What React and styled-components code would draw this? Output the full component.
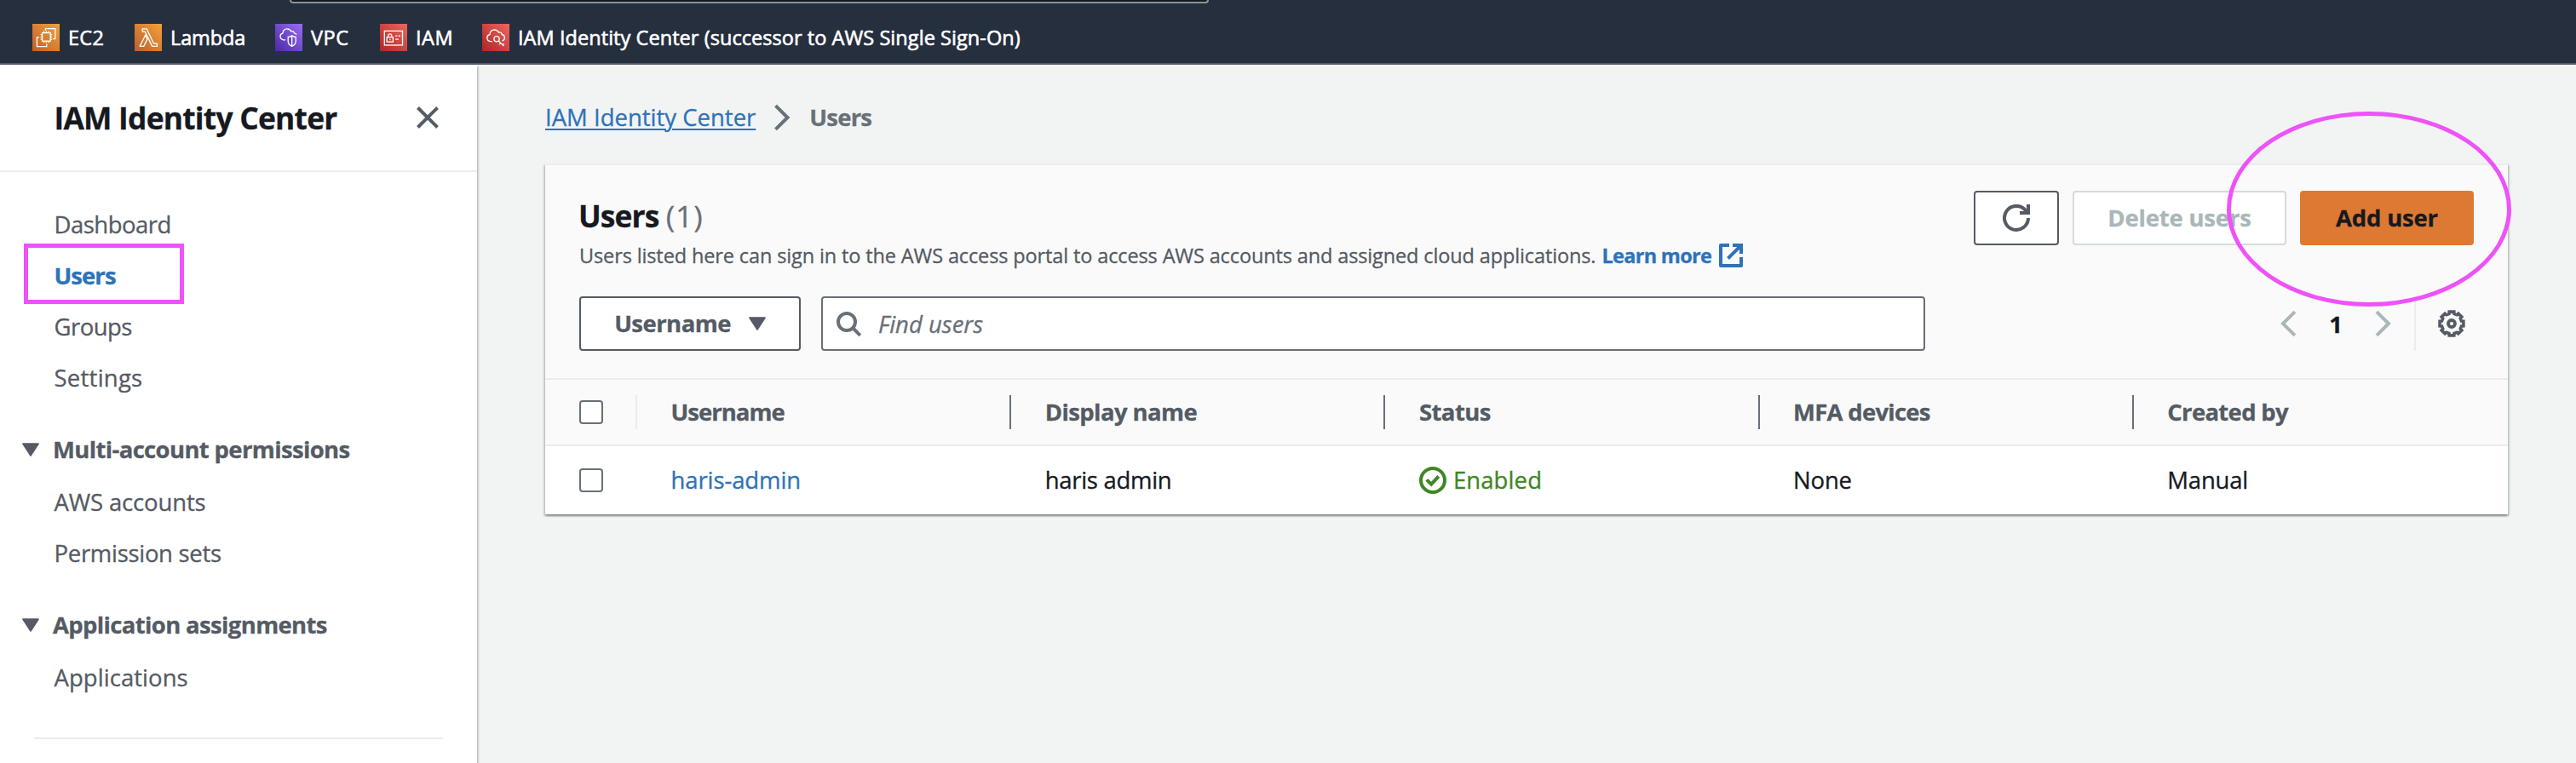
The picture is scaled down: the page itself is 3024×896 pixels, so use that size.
import React from "react";
import styled, { createGlobalStyle, css } from "styled-components";

const color = {
  ink: "#16191f",
  body: "#545b64",
  muted: "#687078",
  link: "#2e73b8",
  line: "#eaeded",
  disabled: "#aab7b8",
  mark: "#ee52f9",
};

const GlobalStyle = createGlobalStyle`
  *, *::before, *::after { box-sizing: border-box; }
  body {
    margin: 0;
    background: #f2f4f3;
    color: ${color.ink};
    font-family: "Open Sans", "Noto Sans", sans-serif;
    font-size: 27.5px;
    -webkit-text-stroke: 0.3px;
  }
  svg { display: block; flex: none; }
`;

const Page = styled.div`
  height: 896px;
  overflow: hidden;
  display: flex;
  flex-direction: column;
`;

/* ---------- top navigation ---------- */

const TopBar = styled.header`
  flex: none;
  height: 76px;
  background: #262f3e;
  border-bottom: 2px solid #545b64;
  position: relative;
  z-index: 1;
`;

const GlobalSearchEdge = styled.div`
  width: 1079px;
  height: 4px;
  margin-left: 340px;
  background: #16191f;
  border: 2px solid #879596;
  border-top: 0;
  border-radius: 0 0 4px 4px;
`;

const Shortcuts = styled.nav`
  display: grid;
  grid-template-columns: 120px 165px 123px 120px auto;
  padding: 24px 0 0 38px;
`;

const Shortcut = styled.a`
  display: flex;
  align-items: center;
  gap: 10px;
  height: 32px;
  color: #fff;
  font-size: 23.5px;
  line-height: 32px;
  letter-spacing: ${(p) => p.$track || 0}px;
  white-space: nowrap;
  -webkit-text-stroke: 0.6px;
`;

/* ---------- side navigation ---------- */

const Columns = styled.div`
  flex: 1;
  display: flex;
  min-height: 0;
`;

const SideNav = styled.aside`
  flex: none;
  width: 560px;
  background: #fff;
  box-shadow: 0 2px 2px 0 rgba(0, 28, 36, 0.3), 2px 2px 2px 0 rgba(0, 28, 36, 0.15);
`;

const SideHeader = styled.div`
  display: flex;
  align-items: center;
  justify-content: space-between;
  height: 126px;
  padding: 0 44px 0 63.5px;
  border-bottom: 2px solid ${color.line};
`;

const SideTitle = styled.h2`
  margin: 0;
  font-size: 35.4px;
  line-height: 44px;
  letter-spacing: -0.78px;
`;

const NavList = styled.ul`
  list-style: none;
  margin: ${(p) => (p.$nested ? "2px 0 0" : "32px 0 0")};
  padding: 0;
`;

const NavItem = styled.li`
  position: relative;
  height: 60px;
  padding-left: 63.5px;
  line-height: 60px;
  color: ${color.body};
  letter-spacing: ${(p) => p.$track || 0}px;
  ${(p) =>
    p.$active &&
    css`
      color: ${color.link};
      font-weight: 700;
    `}
`;

const NavSection = styled.h3`
  display: flex;
  align-items: center;
  gap: 16px;
  height: 60px;
  margin: 24px 0 0;
  padding-left: 26px;
  color: ${color.body};
  font-size: 27.5px;
  line-height: 60px;
  letter-spacing: -0.65px;
`;

const NavDivider = styled.hr`
  height: 2px;
  margin: 40px 40px 0;
  border: 0;
  background: ${color.line};
`;

const BoxMark = styled.span`
  position: absolute;
  left: 28px;
  top: -8px;
  width: 187.5px;
  height: 71px;
  border: 5px solid ${color.mark};
`;

/* ---------- main column ---------- */

const Main = styled.main`
  flex: 1;
  padding: 0 80px;
`;

const Breadcrumbs = styled.nav`
  display: flex;
  align-items: center;
  height: 116px;
  padding-top: 7px;
  gap: 21px;
`;

const CrumbLink = styled.a`
  color: ${color.link};
  text-decoration: underline;
  text-decoration-thickness: 2px;
  text-underline-offset: 3px;
`;

const CrumbCurrent = styled.span`
  margin-left: 1px;
  color: ${color.muted};
  font-weight: 700;
  letter-spacing: -0.8px;
`;

const Card = styled.section`
  background: #fff;
  border-top: 2px solid ${color.line};
  box-shadow: 0 2px 2px 0 rgba(0, 28, 36, 0.3), 2px 2px 2px 0 rgba(0, 28, 36, 0.15),
    -2px 2px 2px 0 rgba(0, 28, 36, 0.15);
`;

const CardHeader = styled.header`
  height: 252px;
  padding: 30px 40px 0;
  background: #fafafa;
  border-bottom: 2px solid ${color.line};
`;

const HeadingRow = styled.div`
  display: flex;
  justify-content: space-between;
  height: 124px;
`;

const Heading = styled.h1`
  margin: 0 0 0 -1px;
  font-size: 35.4px;
  line-height: 58px;
  letter-spacing: -0.9px;
`;

const Counter = styled.span`
  color: ${color.muted};
  font-weight: 400;
  letter-spacing: 0.9px;
`;

const Description = styled.div`
  display: flex;
  align-items: center;
  color: ${color.body};
  font-size: 23.5px;
  line-height: 36px;
  letter-spacing: -0.125px;
  white-space: nowrap;
`;

const LearnMore = styled.a`
  display: flex;
  align-items: center;
  gap: 9px;
  margin-left: 7px;
  color: ${color.link};
  font-weight: 700;
  letter-spacing: -0.7px;
`;

const Actions = styled.div`
  display: flex;
  gap: 16px;
`;

const variants = {
  normal: css`
    color: ${color.body};
    background: #fff;
    border-color: ${color.body};
  `,
  disabled: css`
    color: ${color.disabled};
    background: #fff;
    border-color: #d5dbdb;
  `,
  primary: css`
    color: ${color.ink};
    background: #dd7933;
    border-color: #dd7933;
  `,
};

const Button = styled.button`
  position: relative;
  display: flex;
  align-items: center;
  justify-content: center;
  gap: 21px;
  width: ${(p) => p.$width}px;
  height: 64px;
  padding: 0;
  border: 2px solid;
  border-radius: 4px;
  font: 700 27.5px/40px "Open Sans", "Noto Sans", sans-serif;
  letter-spacing: ${(p) => p.$track || -0.2}px;
  white-space: nowrap;
  ${(p) => variants[p.$variant || "normal"]}
`;

const OvalMark = styled.span`
  position: absolute;
  left: -88.5px;
  top: -95px;
  width: 334px;
  height: 229px;
  border: 5px solid ${color.mark};
  border-radius: 50%;
`;

const FilterRow = styled.div`
  display: flex;
  align-items: center;
  gap: 24px;
`;

const SearchBox = styled.div`
  display: flex;
  align-items: center;
  gap: 19px;
  width: 1296px;
  height: 64px;
  padding-left: 14px;
  background: #fff;
  border: 2px solid ${color.muted};
  border-radius: 4px;
  color: ${color.muted};
  font-style: italic;
`;

const Pagination = styled.div`
  display: flex;
  align-items: center;
  margin-left: auto;
  padding-right: 10px;
`;

const PageNumber = styled.span`
  width: 80px;
  text-align: center;
  font-weight: 700;
`;

const PaginationDivider = styled.span`
  width: 2px;
  height: 64px;
  margin: 0 26px 0 20px;
  background: ${color.line};
`;

/* ---------- table ---------- */

const Row = styled.div`
  display: grid;
  grid-template-columns: 108px repeat(5, 1fr);
  height: ${(p) => (p.$head ? 78 : 80)}px;
  line-height: 36px;
  ${(p) =>
    p.$head &&
    css`
      background: #fafafa;
      border-bottom: 2px solid ${color.line};
      color: ${color.body};
      font-weight: 700;
    `}
`;

const Cell = styled.div`
  display: flex;
  align-items: center;
  gap: 8px;
  padding-left: 39.5px;
  letter-spacing: ${(p) => p.$track || 0}px;
  ${(p) =>
    p.$tone &&
    css`
      color: ${p.$tone};
    `}
`;

const CheckCell = styled(Cell)`
  padding-left: 40px;
`;

const ColumnRule = styled.span`
  width: 2px;
  height: 40px;
  margin-left: auto;
  background: ${(p) => (p.$light ? color.line : color.muted)};
`;

const Checkbox = styled.span`
  width: 28px;
  height: 28px;
  background: #fff;
  border: 2px solid ${color.muted};
  border-radius: 4px;
`;

/* ---------- icons ---------- */

const ServiceIcon = ({ id, from, to, children }) => (
  <svg width="32" height="32" viewBox="0 0 32 32" fill="none">
    <linearGradient id={id} x1="0" y1="1" x2="1" y2="0">
      <stop offset="0" stopColor={from} />
      <stop offset="1" stopColor={to} />
    </linearGradient>
    <rect width="32" height="32" fill={`url(#${id})`} />
    <g stroke="#fff" strokeWidth="1.3">{children}</g>
  </svg>
);

const Ec2Icon = () => (
  <ServiceIcon id="ec2" from="#bf5f2b" to="#f2a13c">
    <rect x="11.6" y="10.6" width="9.6" height="9.6" />
    <path d="M13.6 10.6V8.6M16.4 10.6V8.6M19.2 10.6V8.6M13.6 22.2v-2M16.4 22.2v-2M19.2 22.2v-2M11.6 12.6h-2M11.6 15.4h-2M11.6 18.2h-2M23.2 12.6h-2M23.2 15.4h-2M23.2 18.2h-2" />
    <path d="M15.4 7.4V5.6h11.4v12h-2.6M8 15.8H5.4v10.8h11.4v-3" />
  </ServiceIcon>
);

const LambdaIcon = () => (
  <ServiceIcon id="lambda" from="#bf5f2b" to="#f2a13c">
    <path
      strokeLinejoin="round"
      d="M9.2 5.8h4.9l8.4 17.4h3.9v3.2h-5.7L12.2 9.1h-3zM12.6 13.2l2.3 4.9-4.2 8.3H6.2z"
    />
  </ServiceIcon>
);

const VpcIcon = () => (
  <ServiceIcon id="vpc" from="#4a2aa0" to="#9a6cf8">
    <path d="M12.2 18.8H9.6c-2.3-.5-3.6-2-3.6-4.2 0-2 1.3-3.3 3.1-3.8C9 7.8 11.2 5.8 14 5.8c2.2 0 3.9 1.2 4.8 3 1.7-.7 3.3.2 3.6 2.1 1.3.2 2.2.8 2.7 1.7" />
    <path d="M19.7 13.9c1.4 1 2.9 1.4 4.5 1.4v5.2c0 2.6-1.8 4.6-4.5 5.8-2.7-1.2-4.5-3.2-4.5-5.8v-5.2c1.6 0 3.1-.4 4.5-1.4zM19.7 13.9v12.4" />
  </ServiceIcon>
);

const IamIcon = () => (
  <ServiceIcon id="iam" from="#ae2524" to="#ef655e">
    <rect x="5.3" y="8.4" width="21.2" height="16.6" />
    <rect x="8.2" y="15.6" width="7.2" height="5.6" />
    <path d="M9.8 15.6v-1.8a2 2 0 0 1 4 0v1.8M11.8 17.6v1.6M18.2 14.2h2.2M21.6 14.2h2.4M18.2 18.2h3.6" />
  </ServiceIcon>
);

const IdentityCenterIcon = () => (
  <ServiceIcon id="idc" from="#ae2524" to="#ef655e">
    <path d="M11.8 20.6H9.6c-2.4-.5-3.8-2-3.8-4.2 0-2 1.3-3.4 3.2-3.9 0-3.3 2.3-5.5 5.3-5.5 2.4 0 4.2 1.2 5.1 3.2 1.9-.8 3.5.3 3.8 2.3 2 .4 3.2 1.8 3.2 3.8 0 1.9-1.1 3.3-2.8 3.9" />
    <circle cx="17" cy="17.8" r="3.1" />
    <path d="m19.2 20 6.2 6M21.8 22.6l-1.6 1.7M24.2 24.9l1.5-1.6" />
  </ServiceIcon>
);

const CloseIcon = () => (
  <svg width="28" height="28" viewBox="0 0 28 28" fill="none" stroke={color.body} strokeWidth="4">
    <path d="M2.5 2.5l23 23M25.5 2.5l-23 23" />
  </svg>
);

const CaretDown = () => (
  <svg width="20" height="16" viewBox="0 0 20 16" fill={color.body} stroke={color.body} strokeWidth="2" strokeLinejoin="round">
    <path d="M1.2 1.2h17.6L10 14.8z" />
  </svg>
);

const Chevron = ({ tone, flip }) => (
  <svg width="32" height="32" viewBox="0 0 32 32" fill="none" stroke={tone} strokeWidth="4">
    <path d={flip ? "M24 2.2 10 16l14 13.8" : "M8 2.2 22 16 8 29.8"} />
  </svg>
);

const CrumbChevron = () => (
  <svg width="20" height="32" viewBox="0 0 20 32" fill="none" stroke={color.muted} strokeWidth="4">
    <path d="M2.5 2.2 16.5 16l-14 13.8" />
  </svg>
);

const RefreshIcon = () => (
  <svg width="32" height="32" viewBox="0 0 16 16" fill="none" stroke="currentColor" strokeWidth="2">
    <path d="M15 8a7 7 0 1 1-1.6-4.5L14.8 5" />
    <path d="M10 5h5V0" />
  </svg>
);

const ExternalIcon = () => (
  <svg width="28" height="28" viewBox="0 0 28 28" fill="none" stroke="currentColor" strokeWidth="4" strokeLinejoin="round">
    <path d="M12 2H2v24h24V16" />
    <path strokeLinejoin="miter" d="M16 2h10v10M26 2 10.5 17.5" />
  </svg>
);

const SearchIcon = () => (
  <svg width="32" height="32" viewBox="0 0 32 32" fill="none" stroke="currentColor" strokeWidth="4">
    <circle cx="14" cy="14" r="10" />
    <path d="m21 21 8.8 8.8" />
  </svg>
);

const SuccessIcon = () => (
  <svg width="32" height="32" viewBox="0 0 32 32" fill="none" stroke="currentColor" strokeWidth="4">
    <circle cx="16" cy="16" r="14" />
    <path d="m8.8 15.4 5.4 5.2 8.6-9.2" />
  </svg>
);

const gearOutline = (() => {
  const points = [];
  for (let tooth = 0; tooth < 8; tooth += 1) {
    [
      [-11.5, 14.2],
      [11.5, 14.2],
      [14.5, 11.9],
      [30.5, 11.9],
    ].forEach(([offset, radius]) => {
      const angle = ((tooth * 45 - 90 + offset) * Math.PI) / 180;
      points.push(`${(16 + radius * Math.cos(angle)).toFixed(2)} ${(16 + radius * Math.sin(angle)).toFixed(2)}`);
    });
  }
  return `M${points.join("L")}Z`;
})();

const GearIcon = () => (
  <svg width="32" height="32" viewBox="0 0 32 32" fill="none" stroke={color.body}>
    <path d={gearOutline} strokeWidth="3.6" />
    <circle cx="16" cy="16" r="4" strokeWidth="3.8" />
  </svg>
);

/* ---------- content ---------- */

const shortcuts = [
  { label: "EC2", Icon: Ec2Icon, track: 0.3 },
  { label: "Lambda", Icon: LambdaIcon, track: -0.1 },
  { label: "VPC", Icon: VpcIcon, track: 0.5 },
  { label: "IAM", Icon: IamIcon, track: 0.5 },
  { label: "IAM Identity Center (successor to AWS Single Sign-On)", Icon: IdentityCenterIcon, track: 0.06 },
];

const columns = [
  { label: "Username", track: -0.98 },
  { label: "Display name", track: -0.6 },
  { label: "Status", track: -0.55 },
  { label: "MFA devices", track: -0.75 },
  { label: "Created by", track: -0.7 },
];

export default function App() {
  return (
    <Page>
      <GlobalStyle />
      <TopBar>
        <GlobalSearchEdge />
        <Shortcuts>
          {shortcuts.map(({ label, Icon, track }) => (
            <Shortcut key={label} $track={track}>
              <Icon />
              {label}
            </Shortcut>
          ))}
        </Shortcuts>
      </TopBar>
      <Columns>
        <SideNav>
          <SideHeader>
            <SideTitle>IAM Identity Center</SideTitle>
            <CloseIcon />
          </SideHeader>
          <NavList>
            <NavItem $track={-0.5}>Dashboard</NavItem>
            <NavItem $active $track={-0.95}>
              Users
              <BoxMark />
            </NavItem>
            <NavItem $track={-0.55}>Groups</NavItem>
            <NavItem $track={0.25}>Settings</NavItem>
          </NavList>
          <NavSection>
            <CaretDown />
            Multi-account permissions
          </NavSection>
          <NavList $nested>
            <NavItem $track={-0.15}>AWS accounts</NavItem>
            <NavItem $track={-0.3}>Permission sets</NavItem>
          </NavList>
          <NavSection>
            <CaretDown />
            Application assignments
          </NavSection>
          <NavList $nested>
            <NavItem $track={0.05}>Applications</NavItem>
          </NavList>
          <NavDivider />
        </SideNav>
        <Main>
          <Breadcrumbs>
            <CrumbLink>IAM Identity Center</CrumbLink>
            <CrumbChevron />
            <CrumbCurrent>Users</CrumbCurrent>
          </Breadcrumbs>
          <Card>
            <CardHeader>
              <HeadingRow>
                <div>
                  <Heading>
                    Users <Counter>(1)</Counter>
                  </Heading>
                  <Description>
                    Users listed here can sign in to the AWS access portal to access AWS accounts and assigned cloud
                    applications.
                    <LearnMore>
                      Learn more
                      <ExternalIcon />
                    </LearnMore>
                  </Description>
                </div>
                <Actions>
                  <Button $width={100} aria-label="Refresh">
                    <RefreshIcon />
                  </Button>
                  <Button $width={251} $variant="disabled">
                    Delete users
                  </Button>
                  <Button $width={204} $variant="primary">
                    Add user
                    <OvalMark />
                  </Button>
                </Actions>
              </HeadingRow>
              <FilterRow>
                <Button $width={260} $track={-0.55}>
                  Username
                  <CaretDown />
                </Button>
                <SearchBox>
                  <SearchIcon />
                  Find users
                </SearchBox>
                <Pagination>
                  <Chevron tone={color.disabled} flip />
                  <PageNumber>1</PageNumber>
                  <Chevron tone={color.disabled} />
                  <PaginationDivider />
                  <GearIcon />
                </Pagination>
              </FilterRow>
            </CardHeader>
            <Row $head>
              <CheckCell>
                <Checkbox />
                <ColumnRule $light />
              </CheckCell>
              {columns.map(({ label, track }, i) => (
                <Cell key={label} $track={track}>
                  {label}
                  {i < columns.length - 1 && <ColumnRule />}
                </Cell>
              ))}
            </Row>
            <Row>
              <CheckCell>
                <Checkbox />
              </CheckCell>
              <Cell $tone={color.link} $track={-0.1}>
                haris-admin
              </Cell>
              <Cell $track={-0.3}>haris admin</Cell>
              <Cell $tone="#3f8624" $track={0.1}>
                <SuccessIcon />
                Enabled
              </Cell>
              <Cell $track={-0.2}>None</Cell>
              <Cell $track={-0.2}>Manual</Cell>
            </Row>
          </Card>
        </Main>
      </Columns>
    </Page>
  );
}
